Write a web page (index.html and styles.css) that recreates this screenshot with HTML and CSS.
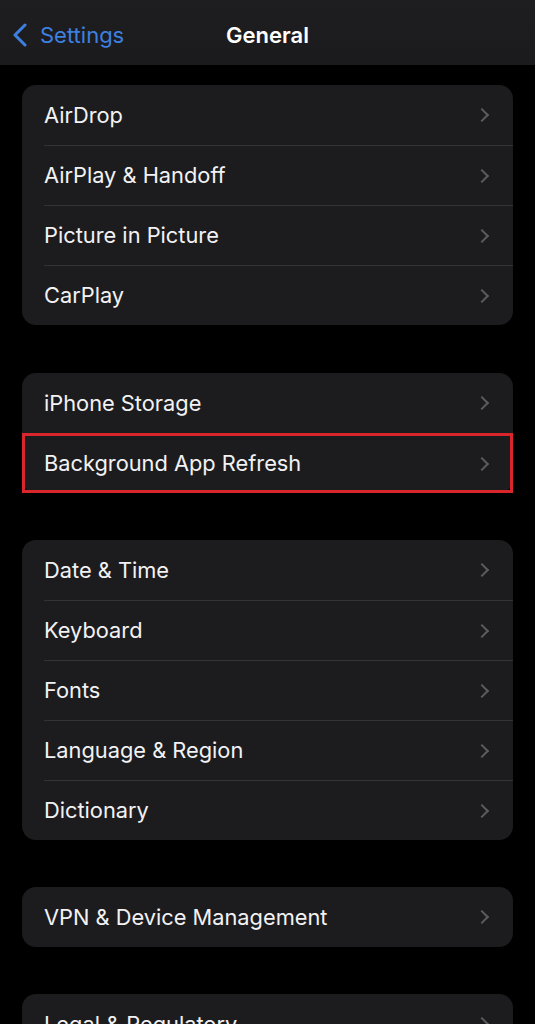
FILE: index.html
```html
<!DOCTYPE html>
<html>
<head>
<meta charset="utf-8">
<link rel="stylesheet" href="styles.css">
</head>
<body>
<header class="nav">
  <div class="back">
    <svg class="back-icon" width="16" height="24" viewBox="0 0 16 24"><path d="M13 2 L3 12 L13 22" fill="none" stroke="#3d80e0" stroke-width="3" stroke-linecap="round" stroke-linejoin="round"/></svg>
    <span>Settings</span>
  </div>
  <div class="title">General</div>
</header>
<main class="content">
  <section class="group">
    <div class="row"><span>AirDrop</span><i class="chev"></i></div>
    <div class="row"><span>AirPlay &amp; Handoff</span><i class="chev"></i></div>
    <div class="row"><span>Picture in Picture</span><i class="chev"></i></div>
    <div class="row"><span>CarPlay</span><i class="chev"></i></div>
  </section>
  <section class="group">
    <div class="row"><span>iPhone Storage</span><i class="chev"></i></div>
    <div class="row highlight"><span>Background App Refresh</span><i class="chev"></i></div>
  </section>
  <section class="group">
    <div class="row"><span>Date &amp; Time</span><i class="chev"></i></div>
    <div class="row"><span>Keyboard</span><i class="chev"></i></div>
    <div class="row"><span>Fonts</span><i class="chev"></i></div>
    <div class="row"><span>Language &amp; Region</span><i class="chev"></i></div>
    <div class="row"><span>Dictionary</span><i class="chev"></i></div>
  </section>
  <section class="group">
    <div class="row"><span>VPN &amp; Device Management</span><i class="chev"></i></div>
  </section>
  <section class="group">
    <div class="row"><span>Legal &amp; Regulatory</span><i class="chev"></i></div>
  </section>
</main>
</body>
</html>
```
FILE: styles.css
```css
* { box-sizing: border-box; }
html, body { margin: 0; padding: 0; }
body {
  background: #000;
  width: 535px;
  height: 1024px;
  overflow: hidden;
  font-family: Inter, "Noto Sans", sans-serif;
  color: #f2f2f4;
}
.nav {
  height: 65px;
  background: linear-gradient(180deg, #1e1e20 0%, #1b1b1d 100%);
  position: relative;
  display: flex;
  align-items: center;
  justify-content: center;
}
.back {
  position: absolute;
  left: 12px;
  top: 22px;
  display: flex;
  align-items: center;
  gap: 12px;
  color: #3d80e0;
  font-size: 22px;
}
.back-icon { display: block; }
.title {
  font-size: 22px;
  font-weight: 600;
  color: #fff;
  margin-top: 4px;
}
.content {
  padding: 20px 22px 0;
  display: flex;
  flex-direction: column;
  gap: 47px;
}
.group {
  background: #1c1c1e;
  border-radius: 14px;
}
.group:first-child { margin-bottom: 1px; }
.row {
  height: 60px;
  margin-left: 22px;
  padding-right: 22px;
  display: flex;
  align-items: center;
  justify-content: space-between;
  font-size: 21.8px;
  border-top: 1px solid #333336;
  position: relative;
}
.row:first-child { border-top: none; }
.row span { margin-top: -1px; }
.chev {
  width: 10px;
  height: 10px;
  border-right: 2.5px solid #5c5c60;
  border-top: 2.5px solid #5c5c60;
  transform: rotate(45deg);
  margin-right: 4px;
}
.highlight::after {
  content: "";
  position: absolute;
  left: -22px;
  right: 0;
  top: -1px;
  bottom: 0;
  border: 3px solid #d9262c;
}
```
